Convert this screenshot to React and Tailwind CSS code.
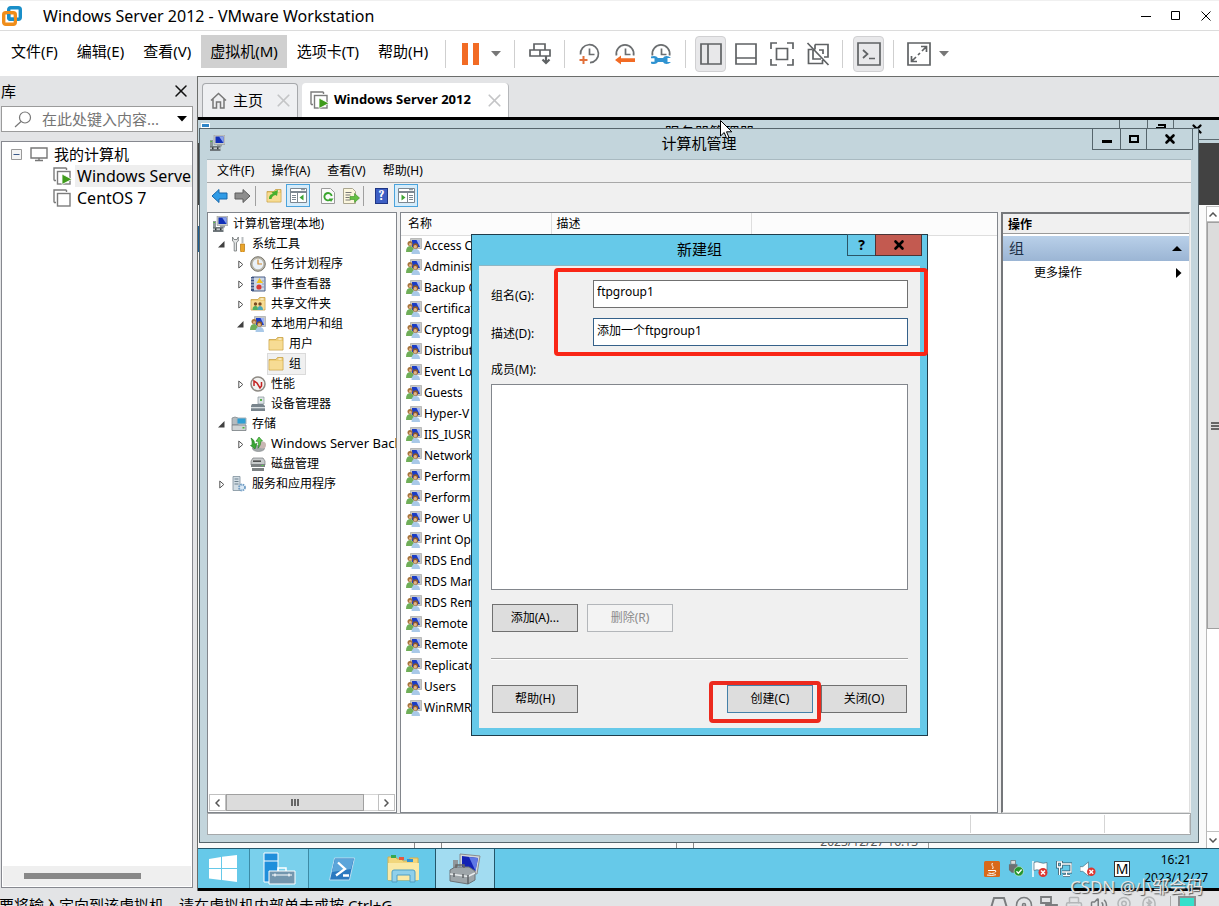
import { useState } from 'react';
import clsx from 'clsx';
import { Disc, Printer, Volume2, Webcam, X } from 'lucide-react';

const hostMenus = ['文件(F)', '编辑(E)', '查看(V)', '虚拟机(M)', '选项卡(T)', '帮助(H)'];
const guestMenus = ['文件(F)', '操作(A)', '查看(V)', '帮助(H)'];

const groups = [
  'Access Control Assistance Operators',
  'Administrators',
  'Backup Operators',
  'Certificate Service DCOM Access',
  'Cryptographic Operators',
  'Distributed COM Users',
  'Event Log Readers',
  'Guests',
  'Hyper-V Administrators',
  'IIS_IUSRS',
  'Network Configuration Operators',
  'Performance Log Users',
  'Performance Monitor Users',
  'Power Users',
  'Print Operators',
  'RDS Endpoint Servers',
  'RDS Management Servers',
  'RDS Remote Access Servers',
  'Remote Desktop Users',
  'Remote Management Users',
  'Replicator',
  'Users',
  'WinRMRemoteWMIUsers__',
];

const indents = ['pl-[4px]', 'pl-[8px]', 'pl-[27px]', 'pl-[45px]'];

/* ---------- icons ---------- */

function VMwareLogo() {
  return (
    <svg width="22" height="22" viewBox="0 0 22 22" fill="none" strokeWidth="3.4">
      <rect x="7.7" y="2.7" width="11.6" height="11.6" rx="2" stroke="#1a8fc9" />
      <rect x="2.7" y="7.7" width="11.6" height="11.6" rx="2" stroke="#ef8d1a" />
      <path d="M7.7 9v3.3a2 2 0 0 0 2 2H13" stroke="#1a8fc9" />
    </svg>
  );
}

function Stack({ running }) {
  return (
    <svg width="20" height="18" viewBox="0 0 20 18" fill="none" stroke="#7c7c7c" strokeWidth="1.4">
      <path d="M1 13.5V1h12.5" />
      <path d="M1 13.5h2M13.5 1v2" />
      <rect x="4.5" y="4.5" width="12.5" height="12.5" fill="#fff" />
      {running && <path d="M9 7v10.5l10-5.200z" fill="#3f9b1c" stroke="#fff" strokeWidth=".8" />}
    </svg>
  );
}

function Caret({ className }) {
  return (
    <svg width="10" height="6" viewBox="0 0 10 6" className={className}>
      <path d="M0 0h10L5 5.5z" fill="currentColor" />
    </svg>
  );
}

function Clock({ kind }) {
  return (
    <svg width="22" height="22" viewBox="0 0 22 22" fill="none" stroke="#6b6e70" strokeWidth="1.7">
      {kind === 'add' && <path d="M2.500 11.500A9 9 0 1 1 12 19.700" />}
      {kind !== 'add' && <path d="M2.500 12.500a8.700 8.700 0 1 1 17 0" />}
      <path d="M11.500 5.500v6h5" />
      {kind === 'add' && <path d="M5.500 13v8M1.500 17h8" stroke="#e2703a" strokeWidth="2" />}
      {kind === 'revert' && <path d="M1 17l6-4.500v2.700h14v3.800H7v2.500z" fill="#f26b24" stroke="none" />}
      {kind === 'manage' && (
        <path
          d="M1 13.500q5-1.500 7 1.500h5q1-2 3.500-2t4.500 2h-3.500v4H21q-2 2-4.500 2t-3.500-2H8q-2 3-7 1.500v-1.700h3.500v-3.600H1z"
          fill="#2f93d1"
          stroke="none"
        />
      )}
    </svg>
  );
}

function ToolIcon({ children, size = 24 }) {
  return (
    <svg width={size} height={size} viewBox="0 0 24 24" fill="none" stroke="#5f6264" strokeWidth="1.700">
      {children}
    </svg>
  );
}

function ComputerIcon({ size = 16 }) {
  return (
    <svg width={size} height={size} viewBox="0 0 16 16">
      <path d="M5 0h11v9.500H5z" fill="#c9ccc9" stroke="#888" strokeWidth=".5" />
      <path d="M6.500 1.500h8v6.500h-8z" fill="#1230b8" />
      <path d="M10 1.500h4.500V8z" fill="#8aa2ec" />
      <path d="M1 5h3v6H1z" fill="#8c9699" />
      <path d="M1.500 6h1.500v1H1.500z" fill="#4fbf3a" />
      <path d="M8 9.500h5v2H8z" fill="#9aa0a2" />
      <path d="M1 11h10.500v5H1z" fill="#6f777b" />
      <path d="M1 12.700h10.500v1H1z" fill="#e3e6e8" />
      <path d="M3 12.200h1.500v2H3zM8 12.200h1.500v2H8z" fill="#30363a" />
    </svg>
  );
}

function GroupIcon() {
  return (
    <svg width="16" height="16" viewBox="0 0 16 16" className="shrink-0">
      <path d="M4.500 .5h11v10h-11z" fill="#c7c9c7" stroke="#9a9c9a" strokeWidth=".6" />
      <path d="M6 2h8v7H6z" fill="#1b3cc4" />
      <path d="M10.500 2H14v7z" fill="#9fb3f2" />
      <circle cx="4" cy="5.500" r="2.500" fill="#a8743c" />
      <circle cx="4.300" cy="6.300" r="1.300" fill="#dfb487" />
      <path d="M0 14c0-4 1.500-6 4-6s4 2 4 6z" fill="#6fae58" />
      <circle cx="9.500" cy="8" r="2.700" fill="#8c5a2b" />
      <circle cx="9.300" cy="8.800" r="1.700" fill="#e2b489" />
      <path d="M5.500 16c0-3.500 1.500-5 4-5s4.500 1.500 4.500 5z" fill="#a9c9e8" />
    </svg>
  );
}

function FolderIcon({ children }) {
  return (
    <svg width="16" height="16" viewBox="0 0 16 16" className="shrink-0">
      <path d="M1 3.500h7l1.500-2H15V14H1z" fill="#f0cf78" stroke="#c79f44" strokeWidth=".8" />
      <path d="M1.500 5h13v8.500h-13z" fill="#f7dc94" />
      <path d="M10.500 2.500h3v1h-3z" fill="#fff" />
      {children}
    </svg>
  );
}

function TreeIcon({ kind }) {
  if (kind === 'computer') return <ComputerIcon />;
  if (kind === 'group') return <GroupIcon />;
  if (kind === 'folder') return <FolderIcon />;
  if (kind === 'shared')
    return (
      <FolderIcon>
        <circle cx="5.500" cy="8" r="1.700" fill="#7a4c22" />
        <circle cx="10" cy="8" r="1.700" fill="#7a4c22" />
        <path d="M2.500 14c0-3 1-4 3-4s2.500 1 2.500 4z" fill="#4fae5f" />
        <path d="M7.500 14c0-3 1-4 2.500-4s3 1 3 4z" fill="#4aa8b8" />
      </FolderIcon>
    );
  return (
    <svg width="16" height="16" viewBox="0 0 16 16" className="shrink-0">
      {kind === 'tools' && (
        <>
          <path d="M1.500 1v4l1.700 1.500V15h2.300V6.500L7.300 5V1L6 3.500H3z" fill="#e2e4e4" stroke="#6e7375" strokeWidth=".8" />
          <path d="M10.500 1h2v6h-2z" fill="#b9bdbf" />
          <path d="M9.500 8h4v6.500a2 2 0 0 1-4 0z" fill="#eaa52a" stroke="#b4740d" strokeWidth=".7" />
        </>
      )}
      {kind === 'clock' && (
        <>
          <circle cx="8" cy="8" r="7.300" fill="#b9b5a8" stroke="#77756d" />
          <circle cx="8" cy="8" r="5.300" fill="#eaf1f8" />
          <path d="M8 3.500V8h4" fill="none" stroke="#d08a32" strokeWidth="1.200" />
        </>
      )}
      {kind === 'event' && (
        <>
          <path d="M2 1h13v14H2z" fill="#cdd8e8" stroke="#4b5f86" />
          <path d="M1 1h3v14H1z" fill="#3c5384" />
          <path d="M1 3h3M1 6h3M1 9h3M1 12h3" stroke="#fff" strokeWidth=".8" />
          <path d="M9.500 2l3.500 5H6.500z" fill="#f2c21b" />
          <circle cx="9" cy="11" r="2.600" fill="#d83a35" />
          <path d="M12 5h2M12 8h2M12 11h2" stroke="#7f93b5" strokeWidth=".8" />
        </>
      )}
      {kind === 'perf' && (
        <>
          <circle cx="8" cy="8" r="7" fill="#f2f2f0" stroke="#8d8983" strokeWidth="1.500" />
          <path d="M4 10V5l3 2 3 5 1.500-2V6" fill="none" stroke="#c32222" strokeWidth="1.500" />
        </>
      )}
      {kind === 'device' && (
        <>
          <path d="M8 1h6v7H8z" fill="#dce3e6" stroke="#88929a" strokeWidth=".7" />
          <path d="M10 3h2v2h-2z" fill="#58b14a" />
          <path d="M2 8h11l2 2v5H1v-5z" fill="#78848c" />
          <path d="M1 11h14v1.300H1z" fill="#d7dde0" />
        </>
      )}
      {kind === 'storage' && (
        <>
          <path d="M1 2q3-2 6 0v7H1z" fill="#b5bcc0" stroke="#7c8488" strokeWidth=".7" />
          <path d="M6 2h9v6H6z" fill="#2f9fd4" stroke="#aab3b8" />
          <path d="M1 9h14v5.500H1z" fill="#cfd3d4" stroke="#767c80" strokeWidth=".8" />
          <path d="M11.500 11h2v1.500h-2z" fill="#49b63b" />
        </>
      )}
      {kind === 'backup' && (
        <>
          <ellipse cx="8.500" cy="12.500" rx="6" ry="3" fill="#a3a8aa" stroke="#7b7f81" strokeWidth=".6" />
          <circle cx="12.500" cy="9" r="3.500" fill="#c9b7b4" />
          <path d="M1 2q4 2 3.500 6L7 7.500 5 13 .5 9.500l1.500-.5Q2.500 5 1 2z" fill="#39a935" stroke="#1f7a22" strokeWidth=".6" />
          <path d="M9 1l3.500 4-1.700.3q.2 4-2.800 7 1-4 0-7H6z" fill="#5cc84a" stroke="#1f7a22" strokeWidth=".6" />
        </>
      )}
      {kind === 'disk' && (
        <>
          <path d="M3 2h10l2 3v4H1V5z" fill="#c7cacb" stroke="#76797b" strokeWidth=".7" />
          <path d="M1 8h14v3H1zM2 12h12v3H2z" fill="#7c8183" />
          <path d="M3 4.500h8v1.300H3z" fill="#333" />
          <path d="M11.500 9h2v1h-2z" fill="#5bd14e" />
        </>
      )}
      {kind === 'services' && (
        <>
          <path d="M2 .5h7v14H2z" fill="#d2dde4" stroke="#7f919c" strokeWidth=".8" />
          <path d="M3.500 3h4M3.500 5.500h4M3.500 8h4" stroke="#6b7f8c" />
          <circle cx="11" cy="11.500" r="3" fill="#dbe9f5" stroke="#6f9cc4" strokeWidth="1.800" strokeDasharray="1.600 .8" />
        </>
      )}
    </svg>
  );
}

function Arrow({ right }) {
  return (
    <svg width="17" height="16" viewBox="0 0 17 16">
      <path
        d={right ? 'M16 8L9 1.500V5H1v6h8v3.500z' : 'M1 8l7-6.500V5h8v6H8v3.500z'}
        fill={right ? '#8d8d8d' : '#2f9be6'}
        stroke={right ? '#5c5c5c' : '#1667ab'}
      />
    </svg>
  );
}

function PaneIcon({ flip }) {
  return (
    <svg width="17" height="15" viewBox="0 0 17 15" fill="none" stroke="#7c8790">
      <path d="M.5.5h16v14H.5z" fill="#fff" />
      <path d="M1 3h15v2H1z" fill="#7c8790" stroke="none" />
      <path d="M11 1.700h4" stroke="#7c8790" />
      {flip ? (
        <>
          <path d="M9.500 5v9M11 7.500h4M11 9.500h4M11 11.500h4" />
          <path d="M3.500 6.500v6l4-3z" fill="#3fa535" stroke="none" />
        </>
      ) : (
        <>
          <path d="M7.500 5v9M2 7.500h4M2 9.500h4M2 11.500h4" />
          <path d="M13.500 6.500v6l-4-3z" fill="#3fa535" stroke="none" />
        </>
      )}
    </svg>
  );
}

/* ---------- VMware window ---------- */

function TitleBar() {
  return (
    <header className="flex h-[31px] shrink-0 items-center border-t border-b border-t-[#f0f0f0] border-b-[#dcdcdc] bg-white pl-px">
      <VMwareLogo />
      <h1 className="ml-5 flex-1 text-[16px]">Windows Server 2012 - VMware Workstation</h1>
      <div className="-mr-[2px] flex h-full">
        <button aria-label="最小化" className="flex w-[30px] items-center justify-center">
          <svg width="10" height="10" stroke="#000"><path d="M0 5.500h10" /></svg>
        </button>
        <button aria-label="最大化" className="flex w-[30px] items-center justify-center">
          <svg width="10" height="10" fill="none" stroke="#000"><path d="M.5.5h8v8h-8z" /></svg>
        </button>
        <button aria-label="关闭" className="flex w-[30px] items-center justify-center">
          <svg width="10" height="10" stroke="#000"><path d="M.5.5l9 9M9.500.5l-9 9" /></svg>
        </button>
      </div>
    </header>
  );
}

function Separator() {
  return <div className="h-7 w-px bg-[#cfcfcf]" />;
}

function MenuBar() {
  return (
    <div className="flex h-[45px] shrink-0 items-center bg-white pl-[2px]">
      <nav className="flex gap-px pb-1">
        {hostMenus.map((label) => (
          <button
            key={label}
            className={clsx('h-[33px] px-[9px] text-[15px] whitespace-nowrap', label.startsWith('虚拟机') && 'bg-[#d0d0d0]')}
          >
            {label}
          </button>
        ))}
      </nav>
      <div className="ml-2 flex items-center">
        <Separator />
        <button aria-label="挂起" className="ml-4 flex items-center gap-3">
          <svg width="17" height="22" fill="#f26b24"><path d="M0 0h6v22H0zM11 0h6v22h-6z" /></svg>
          <Caret className="text-[#777]" />
        </button>
        <div className="mx-[13px]"><Separator /></div>
        <button aria-label="发送 Ctrl+Alt+Del">
          <ToolIcon>
            <path d="M6 2h11v6H6zM2 8h10v6H2zM12 8h10v6H12z" />
            <path d="M18 14v7M14.500 17.500L18 21l3.500-3.500" strokeWidth="2.200" />
          </ToolIcon>
        </button>
        <div className="mx-3"><Separator /></div>
        <div className="ml-px flex gap-[14px]">
          <button aria-label="快照"><Clock kind="add" /></button>
          <button aria-label="恢复快照"><Clock kind="revert" /></button>
          <button aria-label="快照管理器"><Clock kind="manage" /></button>
        </div>
        <div className="mr-[9px] ml-[13px]"><Separator /></div>
        <div className="flex items-center">
          <button aria-label="库" className="flex h-9 w-[31px] items-center justify-center rounded border border-[#d0d0d2] bg-[#e8e8ea]">
            <ToolIcon><path d="M2 2h20v20H2zM9 2v20" /></ToolIcon>
          </button>
          <button aria-label="缩略图栏" className="ml-2">
            <ToolIcon><path d="M2 2h20v20H2zM2 16h20" /></ToolIcon>
          </button>
          <button aria-label="全屏" className="ml-3">
            <ToolIcon><path d="M1 7V1h6M17 1h6v6M23 17v6h-6M7 23H1v-6M6.500 6.500h11v11h-11z" /></ToolIcon>
          </button>
          <button aria-label="Unity" className="ml-3">
            <ToolIcon><path d="M9 2.500h13V15h-4M6.500 7.500h-4v14h14V18M9 2.500v5M13 8h4v4M7 8v9h8M1.500 1l21 22" /></ToolIcon>
          </button>
        </div>
        <div className="mx-3"><Separator /></div>
        <button aria-label="控制台" className="-ml-[2px] flex h-9 w-[31px] items-center justify-center rounded border border-[#d0d0d2] bg-[#e8e8ea]">
          <ToolIcon><path d="M1 1h22v22H1zM6 8l4.500 4L6 16M12 16.500h6" /></ToolIcon>
        </button>
        <div className="mr-[13px] ml-[9px]"><Separator /></div>
        <button aria-label="拉伸" className="flex items-center gap-2">
          <ToolIcon><path d="M1 1h22v22H1zM5 19l4-4M15 9l4-4M11 13l2-2M14 4.500h5.500V10M4.500 14v5.500H10" /></ToolIcon>
          <Caret className="text-[#777]" />
        </button>
      </div>
    </div>
  );
}

function Library() {
  return (
    <aside className="flex w-[197px] shrink-0 flex-col pr-1 pb-[3px] pl-px">
      <div className="flex h-[30px] items-center justify-between pr-[2px]">
        <h2 className="text-[15px]">库</h2>
        <button aria-label="关闭库"><X size={20} strokeWidth={1.8} color="#111" /></button>
      </div>
      <div className="flex h-[26px] shrink-0 items-center border border-[#9b9b9b] bg-white pr-1 pl-3">
        <svg width="18" height="17" viewBox="0 0 18 17" fill="none" stroke="#777" strokeWidth="1.200" className="shrink-0">
          <circle cx="11" cy="6.500" r="5.500" />
          <path d="M7 10.500L1 16" />
        </svg>
        <input aria-label="搜索" placeholder="在此处键入内容..." className="ml-[10px] w-full min-w-0 text-[15px] outline-none placeholder:text-[#757575]" />
        <Caret className="w-3 shrink-0 text-black" />
      </div>
      <div className="mt-[9px] flex min-h-0 flex-1 flex-col border border-[#86888f] bg-white pt-px text-[15px] leading-[22px]">
        <div className="flex h-[22px] items-center pl-[9px]">
          <svg width="11" height="11" fill="none"><path d="M.5.5h10v10H.5z" fill="#f4f4f4" stroke="#999" /><path d="M2.500 5.500h6" stroke="#3b5a8a" /></svg>
          <svg width="18" height="16" viewBox="0 0 18 16" fill="none" stroke="#777" strokeWidth="1.400" className="ml-2"><path d="M1 2h16v10H1zM9 12v2.500M5 14.500h8" /></svg>
          <span className="ml-[6px]">我的计算机</span>
        </div>
        <div className="flex h-[22px] items-center gap-[2px] overflow-hidden pl-[51px] text-[16px]">
          <span className="shrink-0"><Stack running /></span>
          <span className="flex-1 overflow-hidden bg-[#eee] pl-[2px] whitespace-nowrap">Windows Server 2012</span>
        </div>
        <div className="flex h-[22px] items-center gap-[4px] pl-[51px] text-[16px]">
          <Stack />
          <span>CentOS 7</span>
        </div>
        <div className="mx-px mt-auto mb-px flex h-5 items-center bg-[#efefef] pl-[21px]">
          <div className="h-[6px] w-[117px] bg-[#888]" />
        </div>
      </div>
    </aside>
  );
}

function Tabs() {
  return (
    <div className="flex h-[41px] shrink-0 items-end gap-1 border-t border-[#6b6d6b] pl-1">
      <div className="flex h-[34px] w-24 items-center rounded-t-[4px] border border-b-0 border-[#a6a8ab] bg-[#eff0f2] pr-[3px] pl-[7px]">
        <svg width="17" height="17" viewBox="0 0 17 17" fill="none" stroke="#777" strokeWidth="1.500"><path d="M1 8.500L8.500 1.500 16 8.500M3 7v9h3.500v-6h4v6H14V7" /></svg>
        <span className="ml-[6px] pb-px text-[15px]">主页</span>
        <button aria-label="关闭主页" className="ml-auto"><X size={21} strokeWidth={2} color="#c4c5c7" /></button>
      </div>
      <div className="flex h-[34px] w-[207px] items-center rounded-t-[4px] border-r border-[#b5b7ba] bg-white pr-[3px] pl-[8px]">
        <Stack running />
        <span className="ml-1 text-[13px] font-bold whitespace-nowrap">Windows Server 2012</span>
        <button aria-label="关闭标签" className="ml-auto"><X size={21} strokeWidth={2} color="#c4c5c7" /></button>
      </div>
    </div>
  );
}

function HostStatus() {
  return (
    <footer className="flex h-[15px] shrink-0 items-start justify-between overflow-hidden pt-[3px] pr-[23px]">
      <p className="-ml-px text-[15px] leading-[22px] whitespace-nowrap">要将输入定向到该虚拟机，请在虚拟机内部单击或按 Ctrl+G。</p>
      <div className="flex gap-[7px] pt-[2px] text-[#7b7d7f]">
        <svg width="18" height="18" viewBox="0 0 18 18" fill="none" stroke="currentColor" strokeWidth="2"><path d="M1 12L4 2h10l3 10v5H1z" /></svg>
        <Disc size={18} />
        <svg width="18" height="18" viewBox="0 0 18 18" fill="none" stroke="currentColor" strokeWidth="1.800"><path d="M1 1h10v6H1zM7 9h10v7H7zM6 7v3" /></svg>
        <Printer size={18} color="#b4b6b8" />
        <Volume2 size={18} />
        <Webcam size={18} color="#b4b6b8" />
        <svg width="18" height="18" viewBox="0 0 18 18" fill="none" stroke="#b4b6b8" strokeWidth="1.500"><rect x="3" y="1" width="12" height="16" rx="6" /><path d="M6.500 6l5 5L9 13V4l2.500 2.500-5 5" /></svg>
        <div className="ml-[5px] h-5 w-px bg-[#aaa]" />
        <div className="h-5 w-[18px] border-2 border-[#8c8f91] bg-[#35e0cb]" />
      </div>
    </footer>
  );
}

/* ---------- guest desktop ---------- */

function ServerManager() {
  return (
    <div className="absolute inset-0 bg-[#fafafa]">
      <div className="relative flex h-[23px] items-start justify-center bg-[#c3d5dc] pt-px">
        <div className="absolute top-[3px] left-[3px] h-[5px] w-[9px] border border-white bg-[#2f86c8]" />
        <span className="pl-[2px] text-[15px] leading-[22px]">服务器管理器</span>
        <div className="absolute top-0 right-0 flex h-5 w-[100px] border-b border-l border-[#5b6a70]">
          <div className="w-7 border-r border-[#5b6a70]" />
          <div className="flex w-[26px] justify-center border-r border-[#5b6a70] pt-1">
            <svg width="10" height="9" fill="none" stroke="#000" strokeWidth="2"><path d="M2 1h7v6M1 4h6v5H1z" /></svg>
          </div>
          <div className="flex flex-1 justify-center pt-[2px]">
            <X size={14} strokeWidth={4} />
          </div>
        </div>
      </div>
      <div className="h-[62px] bg-[#424242]" />
      <div className="mt-[21px] h-[26px] w-[200px] bg-[#1f5f94]" />
      <div className="absolute top-[86px] right-0 bottom-0 flex w-[13px] flex-col border-l border-[#b9b9b9] bg-white">
        <button aria-label="向上滚动" className="flex h-4 items-center justify-center border-y border-[#c0c0c0]">
          <svg width="8" height="5" fill="none" stroke="#555" strokeWidth="1.500"><path d="M.5 4.500L4 1l3.500 3.500" /></svg>
        </button>
        <div className="flex h-[407px] items-center justify-end border border-r-0 border-[#a0a0a0] bg-[#dcdcdc]">
          <svg width="8" height="8" fill="#666"><path d="M0 0h8v2H0zM0 3h8v2H0zM0 6h8v2H0z" /></svg>
        </div>
        <button aria-label="向下滚动" className="mt-auto flex h-[17px] items-center justify-center border-t border-[#c0c0c0]">
          <svg width="8" height="5" fill="none" stroke="#555" strokeWidth="1.500"><path d="M.5.5L4 4 7.500.5" /></svg>
        </button>
      </div>
      <div className="absolute bottom-0 left-0 flex h-[13px] w-[731px] items-center justify-end overflow-hidden border-r border-[#999] pr-[10px] text-[12px] leading-3 text-[#555]">
        2023/12/27 16:13
      </div>
      <div className="absolute bottom-0 left-[216px] h-[6px] w-7 border-x border-[#888]" />
      <div className="absolute bottom-0 left-[478px] h-[6px] w-[18px] border-x border-[#888]" />
    </div>
  );
}

const tree = [
  { level: 0, icon: 'computer', label: '计算机管理(本地)' },
  { level: 1, icon: 'tools', label: '系统工具', open: true },
  { level: 2, icon: 'clock', label: '任务计划程序', open: false },
  { level: 2, icon: 'event', label: '事件查看器', open: false },
  { level: 2, icon: 'shared', label: '共享文件夹', open: false },
  { level: 2, icon: 'group', label: '本地用户和组', open: true },
  { level: 3, icon: 'folder', label: '用户' },
  { level: 3, icon: 'folder', label: '组', selected: true },
  { level: 2, icon: 'perf', label: '性能', open: false },
  { level: 2, icon: 'device', label: '设备管理器' },
  { level: 1, icon: 'storage', label: '存储', open: true },
  { level: 2, icon: 'backup', label: 'Windows Server Backup', open: false, latin: true },
  { level: 2, icon: 'disk', label: '磁盘管理' },
  { level: 1, icon: 'services', label: '服务和应用程序', open: false },
];

function TreePane() {
  return (
    <div className="flex w-[190px] shrink-0 flex-col border border-[#82868c] bg-white">
      <ul className="flex-1 overflow-hidden pt-px">
        {tree.map((node) => (
          <li key={node.label} className={clsx('flex h-5 items-center', indents[node.level])}>
            {node.level > 0 && (
              <span className="flex w-[15px] shrink-0 justify-center pr-1">
                {node.open === true && <svg width="7" height="7"><path d="M6.500 0v6.500H0z" fill="#404040" /></svg>}
                {node.open === false && (
                  <svg width="6" height="9" fill="#fff" stroke="#555"><path d="M.8 1v7l4-3.500z" /></svg>
                )}
              </span>
            )}
            <span className={clsx('flex h-5 items-center gap-[5px] whitespace-nowrap', node.selected && 'bg-[#f0f0f0] pr-1 outline outline-[#dadada]')}>
              <TreeIcon kind={node.icon} />
              <span className={clsx(node.latin && 'text-[13px]')}>{node.label}</span>
            </span>
          </li>
        ))}
      </ul>
      <div className="m-px flex h-[17px] text-[#444]">
        <button aria-label="向左滚动" className="flex w-[17px] items-center justify-center border border-[#c0c0c0]">
          <svg width="5" height="8" fill="none" stroke="#555" strokeWidth="1.500"><path d="M4.500.5L1 4l3.500 3.500" /></svg>
        </button>
        <div className="flex w-[138px] items-center justify-center border border-[#a0a0a0] bg-[#dcdcdc]">
          <svg width="8" height="7" fill="#666"><path d="M0 0h2v7H0zM3 0h2v7H3zM6 0h2v7H6z" /></svg>
        </div>
        <div className="flex-1 border-y border-[#d5d5d5]" />
        <button aria-label="向右滚动" className="flex w-[17px] items-center justify-center border border-[#c0c0c0]">
          <svg width="5" height="8" fill="none" stroke="#555" strokeWidth="1.500"><path d="M.5.5L4 4 .5 7.500" /></svg>
        </button>
      </div>
    </div>
  );
}

function GroupList() {
  return (
    <div className="min-w-0 flex-1 overflow-hidden border border-[#82868c] bg-white">
      <table className="w-full table-fixed border-collapse text-left">
        <thead>
          <tr className="h-[22px] border-b border-[#dedede] bg-[#fcfcfc]">
            <th className="w-[150px] border-r border-[#dedede] pl-[7px] font-normal">名称</th>
            <th className="w-[200px] border-r border-[#dedede] pl-[5px] font-normal">描述</th>
            <th />
          </tr>
        </thead>
        <tbody>
          {groups.map((name) => (
            <tr key={name} className="h-[21px]">
              <td className="p-0 pl-[5px]">
                <div className="flex items-center gap-[2px] overflow-hidden whitespace-nowrap">
                  <GroupIcon /> {name}
                </div>
              </td>
              <td />
              <td />
            </tr>
          ))}
        </tbody>
      </table>
    </div>
  );
}

function ActionsPane() {
  return (
    <div className="w-[189px] shrink-0 border-t-2 border-r border-b border-l-2 border-t-[#75777a] border-r-[#dfdfdf] border-b-[#dfdfdf] border-l-[#75777a] bg-white">
      <h3 className="h-5 border-b border-[#9a9a9a] bg-[#f0f0f0] pl-[5px] font-bold leading-[21px]">操作</h3>
      <div className="mt-[2px] flex h-[25px] items-center justify-between bg-linear-to-b from-[#b9d0e9] to-[#9bb5d4] pr-[7px] pl-[6px] text-[15px] text-[#1c2f45]">
        组
        <svg width="10" height="5"><path d="M0 5h10L5 0z" fill="#000" /></svg>
      </div>
      <button className="flex h-6 w-full items-center justify-between pr-[7px] pl-[31px]">
        更多操作
        <svg width="6" height="10"><path d="M0 0v10l5.500-5z" fill="#000" /></svg>
      </button>
    </div>
  );
}

function DialogButton({ children, primary, disabled }) {
  return (
    <button
      disabled={disabled}
      className={clsx(
        'h-7 w-[86px] border pb-px',
        disabled && 'border-[#b3b6ba] bg-[#f3f3f3] text-[#8b8b8b]',
        primary && 'border-[#4580a8] bg-[#dddddd]',
        !disabled && !primary && 'border-[#707070] bg-[#dddddd]',
      )}
    >
      {children}
    </button>
  );
}

function NewGroupDialog() {
  const [name, setName] = useState('ftpgroup1');
  const [desc, setDesc] = useState('添加一个ftpgroup1');

  return (
    <div role="dialog" aria-label="新建组" className="absolute top-[105px] left-[271px] w-[457px] border border-[#1f3c4a] bg-[#66c9e9] px-[7px] pb-[7px]">
      <div className="flex h-[30px] items-center justify-center pb-[2px] text-[15px]">新建组</div>
      <div className="absolute -top-px right-[5px] flex">
        <button aria-label="帮助" className="h-[22px] w-[29px] border border-[#2b5566] text-[14px] leading-[20px] font-bold">?</button>
        <button aria-label="关闭" className="-ml-px flex h-[22px] w-[47px] items-center justify-center border border-[#4a3436] bg-[#c35a50]">
          <X size={14} strokeWidth={4.5} />
        </button>
      </div>
      <div className="border-t border-[#8fb6c4] bg-[#f0f0f0] px-3 pb-[15px]">
        <div className="flex items-center justify-between pt-[14px]">
          <label htmlFor="group-name" className="pt-1">组名(G):</label>
          <input id="group-name" value={name} onChange={(e) => setName(e.target.value)} className="h-7 w-[315px] border border-[#707070] bg-white px-[3px] pb-[5px] outline-none" />
        </div>
        <div className="flex items-center justify-between pt-[10px]">
          <label htmlFor="group-desc" className="pt-1">描述(D):</label>
          <input id="group-desc" value={desc} onChange={(e) => setDesc(e.target.value)} className="h-7 w-[315px] border border-[#35618a] bg-white px-[3px] pb-[5px] outline-none" />
        </div>
        <p className="pt-[14px] leading-5">成员(M):</p>
        <div className="mt-1 h-[206px] border border-[#82868c] bg-white" />
        <div className="mt-[14px] flex gap-[9px] pl-px">
          <DialogButton>添加(A)...</DialogButton>
          <DialogButton disabled>删除(R)</DialogButton>
        </div>
        <hr className="mt-[26px] border-t border-[#a0a0a0] shadow-[0_1px_0_#fff]" />
        <div className="mt-[26px] flex px-px">
          <DialogButton>帮助(H)</DialogButton>
          <div className="ml-auto flex gap-2">
            <DialogButton primary>创建(C)</DialogButton>
            <DialogButton>关闭(O)</DialogButton>
          </div>
        </div>
      </div>
      {/* highlight marks */}
      <div className="pointer-events-none absolute top-[33px] left-[82px] h-[88px] w-[374px] rounded-[4px] border-4 border-[#f92616]" />
      <div className="pointer-events-none absolute top-[446px] left-[237px] h-[42px] w-[112px] rounded-[4px] border-4 border-[#ec2a1e]" />
    </div>
  );
}

function ComputerManagement() {
  return (
    <div className="absolute top-2 right-5 bottom-[5px] left-px flex flex-col border border-[#56656c] bg-[#c3d5dc] px-[7px] pb-[7px]">
      <div className="flex h-[30px] shrink-0 items-center pb-[2px] pl-[2px]">
        <ComputerIcon />
        <h2 className="flex-1 pr-[18px] text-center text-[15px]">计算机管理</h2>
      </div>
      <div className="absolute -top-px right-[5px] flex h-[22px] border border-[#56656c]">
        <button aria-label="最小化" className="flex w-[27px] items-end justify-center pb-[6px]"><span className="h-[3px] w-[10px] bg-black" /></button>
        <button aria-label="最大化" className="flex w-[27px] items-center justify-center border-x border-[#56656c]"><span className="h-2 w-[10px] border-2 border-black" /></button>
        <button aria-label="关闭" className="flex w-[45px] items-center justify-center"><X size={14} strokeWidth={4.5} /></button>
      </div>
      <div className="flex min-h-0 flex-1 flex-col bg-[#f0f0f0]">
        <nav className="flex h-6 shrink-0 items-center gap-px border-t border-b border-t-[#a9bac1] border-b-[#a8a8a8] pl-[2px]">
          {guestMenus.map((label) => (
            <button key={label} className="px-2">{label}</button>
          ))}
        </nav>
        <div className="flex h-[29px] shrink-0 items-start pt-px pl-1">
          <div className="flex h-[23px] items-center">
            <button aria-label="后退"><Arrow /></button>
            <button aria-label="前进" className="ml-[6px]"><Arrow right /></button>
            <div className="ml-1 h-5 w-px bg-[#a0a0a0]" />
            <button aria-label="上一级" className="ml-[10px]">
              <FolderIcon><path d="M3 11c0-4 2-5 4-5L5.500 4.500 12 2l-1 6-1.500-1C7 7.500 6 9 5.500 11z" fill="#47b02e" /></FolderIcon>
            </button>
            <button aria-label="显示控制台树" className="ml-1 flex h-[23px] w-6 items-center justify-center border border-[#4aa3dc] bg-[#d6ecfa]"><PaneIcon /></button>
            <button aria-label="刷新" className="ml-[11px]">
              <svg width="14" height="16" viewBox="0 0 14 16" fill="none"><path d="M.5.5h9l4 4v11H.5z" fill="#fafafa" stroke="#9a9a9a" /><path d="M9.500 11.500A3.700 3.700 0 1 1 10.700 8" stroke="#3aa52e" strokeWidth="1.900" /><path d="M8 10.500h4.500L10 14z" fill="#3aa52e" /></svg>
            </button>
            <button aria-label="导出列表" className="ml-2">
              <svg width="17" height="16" viewBox="0 0 17 16" fill="none"><path d="M.5.5h9l3 3v12H.5z" fill="#fbf6dd" stroke="#a9a58f" /><path d="M2.500 4.500h6M2.500 7h5M2.500 9.500h4M2.500 12h5" stroke="#777" /><path d="M7 8.500h4.500v-3L16.500 10l-5 4.500v-3H7z" fill="#63c043" stroke="#3c8f26" strokeWidth=".6" /></svg>
            </button>
            <div className="ml-[3px] h-5 w-px bg-[#a0a0a0]" />
            <button aria-label="帮助" className="ml-[11px] h-4 w-[13px] border border-[#1e3584] bg-[#3d5fc4] font-serif text-[13px] leading-[14px] font-bold text-white">?</button>
            <button aria-label="显示操作窗格" className="ml-[6px] flex h-[23px] w-6 items-center justify-center border border-[#4aa3dc] bg-[#d6ecfa]"><PaneIcon flip /></button>
          </div>
        </div>
        <div className="flex min-h-0 flex-1 gap-[3px] pr-px">
          <TreePane />
          <GroupList />
          <ActionsPane />
        </div>
        <div className="flex h-[22px] shrink-0 justify-end border border-[#a5a8aa] bg-white py-px">
          <div className="w-[134px] border-l border-[#d5d5d5]" />
          <div className="w-[86px] border-x border-[#d5d5d5]" />
        </div>
      </div>
      <NewGroupDialog />
    </div>
  );
}

function TaskBar() {
  return (
    <div className="flex h-10 shrink-0 border-t border-[#24566a] bg-[#66c9e9]">
      <button aria-label="开始" className="flex w-[51px] items-center justify-center pr-px">
        <svg width="28" height="27" viewBox="0 0 28 27" fill="#fff"><path d="M0 4l12-2v11H0zM13 1.800L28 0v13H13zM0 14h12v11L0 23.500zM13 14h15v13l-15-2z" /></svg>
      </button>
      <button aria-label="服务器管理器" className="flex w-[60px] items-center justify-center border-x border-[#3d8ba6] bg-[#7ad0ec]">
        <svg width="33" height="33" viewBox="0 0 33 33"><path d="M1 1h14v29H1z" fill="#1f8fdb" stroke="#fff" /><path d="M1 9h14" stroke="#fff" /><path d="M15 19v-3h8v3" fill="none" stroke="#fff" strokeWidth="1.500" /><path d="M6 19h26v13H6z" fill="#7396ae" stroke="#fff" /><path d="M9 23h20M12 21.500v3M26 21.500v3" stroke="#fff" strokeWidth="1.200" /></svg>
      </button>
      <button aria-label="PowerShell" className="flex w-[66px] items-center justify-center">
        <svg width="28" height="24" viewBox="0 0 28 24"><path d="M6.500 1h20l-5 22h-20z" fill="#2a78c0" stroke="#b9dcf0" /><path d="M7 2h18.500L23 12 4 15z" fill="#5ba5da" /><path d="M10 5.500l7 6.500-9 6.500M15 18.500h6" fill="none" stroke="#fff" strokeWidth="2.300" /></svg>
      </button>
      <button aria-label="文件资源管理器" className="flex w-[60px] items-center justify-center pr-1">
        <svg width="33" height="29" viewBox="0 0 33 29"><path d="M1 3h8l1 2h5l1 2h6l1-3h8v22H1z" fill="#f1d67c" stroke="#d5b04e" /><path d="M4 1h5v3H4z" fill="#33a852" /><path d="M12 3h5v3h-5z" fill="#e5573f" /><path d="M20 5h6v3h-6z" fill="#2e91d8" /><path d="M1 9h31v17H1z" fill="#fae9a6" /><path d="M5 28V18q0-2 2-2h19q2 0 2 2v10h-5v-7H10v7z" fill="#8fd0ea" stroke="#4f9fc4" /></svg>
      </button>
      <button aria-label="计算机管理" className="flex w-[60px] items-center justify-center border-x border-[#24566a] bg-[#a2dcf1]">
        <svg width="32" height="32" viewBox="0 0 32 32"><path d="M11 1l20 2-3 18-17-3z" fill="#d4d7d9" stroke="#8a8d90" /><path d="M13 3l16 2-2.500 13L13 16z" fill="#1322b4" /><path d="M20 4l9 1-2.500 13z" fill="#5f78e6" /><path d="M4 7h5v9H4z" fill="#90979b" /><path d="M1 17l5-3h14l6 4v9l-7 4-18-3z" fill="#9ea5a9" stroke="#6c7276" /><path d="M1 21l18 2.500 7-3.500" fill="none" stroke="#e8ebec" strokeWidth="1.500" /><path d="M19 22v9M5 20v4M14 21v4" stroke="#5d6266" strokeWidth="1.500" /><path d="M7 15v-3h8v3" fill="none" stroke="#666" strokeWidth="1.500" /></svg>
      </button>
      <div className="ml-auto flex items-center gap-2">
        <svg width="16" height="16" viewBox="0 0 16 16"><rect width="16" height="16" rx="1.500" fill="#d9691a" /><path d="M8.500 2c-2 3 2 3 0 6M4 9.500h7q2 0 0 2M4.500 12q3 1 6 0M3 14q5 1 9-.3" fill="none" stroke="#fff" /></svg>
        <svg width="16" height="17" viewBox="0 0 17 17"><path d="M3 0h5v4H3z" fill="#ddd" stroke="#666" strokeWidth=".7" /><path d="M1 4h9v6l-3 3H4l-3-3z" fill="#6d6f71" /><circle cx="11.500" cy="11.500" r="5" fill="#23962c" stroke="#dff0df" strokeWidth=".6" /><path d="M9 11.500l2 2 3.500-4" fill="none" stroke="#fff" strokeWidth="1.400" /></svg>
        <svg width="16" height="16" viewBox="0 0 16 16"><path d="M1 0v16" stroke="#fff" strokeWidth="1.500" /><path d="M2 1.500q3-1.500 6 0t7 0v8q-4 1.500-7 0t-6 0z" fill="#fff" stroke="#4d6f80" strokeWidth=".7" /><circle cx="11" cy="11.500" r="4.500" fill="#dd3631" /><path d="M9 9.500l4 4M13 9.500l-4 4" stroke="#fff" strokeWidth="1.500" /></svg>
        <svg width="16" height="16" viewBox="0 0 16 16" fill="none" stroke="#fff" strokeWidth="1.300"><path d="M6 3h9v8H6M10.500 11v3M7 14.500h7M1.500 1h4v5h-4zM3.500 6v8" stroke="#315d70" strokeWidth="3" /><path d="M6 3h9v8H6M10.500 11v3M7 14.500h7M1.500 1h4v5h-4zM3.500 6v8" /></svg>
        <svg width="16" height="16" viewBox="0 0 17 16"><path d="M0 5.500h3L9 .5v15l-6-5H0z" fill="#fff" stroke="#4d6f80" strokeWidth=".7" /><circle cx="12" cy="11" r="4.500" fill="#dd3631" /><path d="M10 9l4 4M14 9l-4 4" stroke="#fff" strokeWidth="1.500" /></svg>
        <span className="ml-[10px] h-4 w-4 border border-[#333] bg-white text-center text-[14px] leading-[14px]">M</span>
      </div>
      <div className="mr-[11px] ml-[14px] text-center text-[12px] leading-[18px] pt-[2px]">
        <div>16:21</div>
        <div>2023/12/27</div>
      </div>
    </div>
  );
}

function GuestScreen() {
  return (
    <div className="flex min-h-0 flex-1 flex-col border-y-[3px] border-black text-[12px]">
      <div className="relative min-h-0 flex-1 overflow-hidden">
        <ServerManager />
        <ComputerManagement />
        <svg width="13" height="20" viewBox="0 0 13 20" className="absolute top-0 left-[522px]">
          <path d="M.5.5v15.500l3.700-3.500 2.500 6 2.300-1-2.500-5.700h5.300z" fill="#fff" stroke="#000" />
        </svg>
      </div>
      <TaskBar />
    </div>
  );
}

export default function App() {
  return (
    <div className="relative flex h-screen flex-col overflow-hidden bg-[#e3e4e6] font-['Noto_Sans','Noto_Sans_CJK_SC',sans-serif] text-black">
      <TitleBar />
      <MenuBar />
      <div className="flex min-h-0 flex-1">
        <Library />
        <main className="flex min-w-0 flex-1 flex-col border-l border-[#6b6d6b]">
          <Tabs />
          <GuestScreen />
        </main>
      </div>
      <HostStatus />
      <div className="pointer-events-none absolute right-4 bottom-[9px] text-[17px] leading-5 text-[#e6e6e6] [text-shadow:1px_1px_1px_#555]">
        CSDN @小邹会码
      </div>
    </div>
  );
}
